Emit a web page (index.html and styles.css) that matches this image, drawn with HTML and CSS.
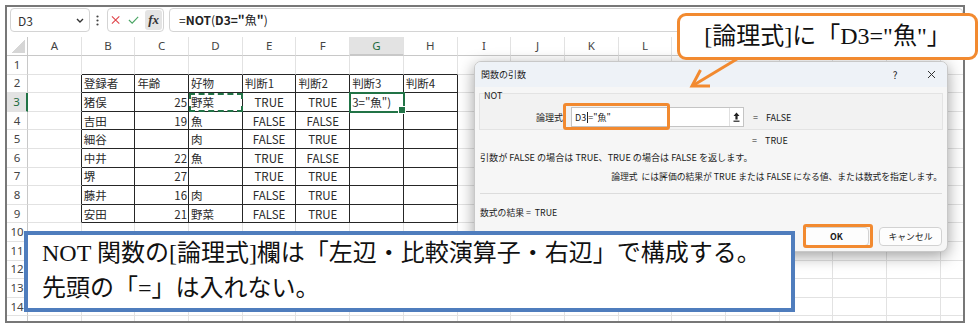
FILE: index.html
```html
<!DOCTYPE html>
<html lang="ja">
<head>
  <meta charset="UTF-8">
  <meta name="viewport" content="width=device-width, initial-scale=1.0">
  <title>NOT関数_関数の引数</title>
  <link rel="stylesheet" href="styles.css">
</head>
<body>
<div class="page">
  <div class="frame">
    <!-- 数式バー -->
    <div class="fbar">
      <div class="namebox">D3
        <svg width="8" height="5" viewBox="0 0 8 5"><polyline points="1,1 4,4 7,1" fill="none" stroke="#333" stroke-width="1.4"/></svg>
      </div>
      <div class="dots">
        <svg width="3" height="11" viewBox="0 0 3 11"><circle cx="1.5" cy="1.5" r="1.1" fill="#444"/><circle cx="1.5" cy="5.5" r="1.1" fill="#444"/><circle cx="1.5" cy="9.5" r="1.1" fill="#444"/></svg>
      </div>
      <div class="fbtns">
        <svg class="ico-x" width="10" height="10" viewBox="0 0 10 10"><path d="M1 1L9 9M9 1L1 9" stroke="#e0454b" stroke-width="1.2"/></svg>
        <svg class="ico-ok" width="12" height="10" viewBox="0 0 12 10"><polyline points="1,5 4.5,8.5 11,1.5" fill="none" stroke="#4aa564" stroke-width="1.2"/></svg>
        <span class="ico-fx">fx</span>
      </div>
      <div class="finput">=<b>NOT</b>(<b>D3="</b>魚<b>"</b>)</div>
    </div>

    <!-- シート -->
    <table class="sheet">
      <colgroup><col class="rh"><col span="18" class="cl"></colgroup>
      <tr class="hd"><th class="corner"></th><th>A</th><th>B</th><th>C</th><th>D</th><th>E</th><th>F</th><th class="sel">G</th><th>H</th><th>I</th><th>J</th><th>K</th><th>L</th><th>M</th><th>N</th><th>O</th><th>P</th><th>Q</th><th>R</th></tr>
      <tr><th>1</th><td></td><td class="tt"></td><td class="tt"></td><td class="tt"></td><td class="tt"></td><td class="tt"></td><td class="tt"></td><td class="tt"></td><td></td><td></td><td></td><td></td><td></td><td></td><td></td><td></td><td></td><td></td></tr>
      <tr><th>2</th><td class="tl"></td><td class="t">登録者</td><td class="t">年齢</td><td class="t">好物</td><td class="t">判断1</td><td class="t">判断2</td><td class="t">判断3</td><td class="t">判断4</td><td></td><td></td><td></td><td></td><td></td><td></td><td></td><td></td><td></td><td></td></tr>
      <tr><th class="cur">3</th><td class="tl"></td><td class="t">猪俣</td><td class="t n">25</td><td class="t ants">野菜</td><td class="t c">TRUE</td><td class="t c">TRUE</td><td class="t act">3="魚")</td><td class="t"></td><td></td><td></td><td></td><td></td><td></td><td></td><td></td><td></td><td></td><td></td></tr>
      <tr><th>4</th><td class="tl"></td><td class="t">吉田</td><td class="t n">19</td><td class="t">魚</td><td class="t c">FALSE</td><td class="t c">FALSE</td><td class="t"></td><td class="t"></td><td></td><td></td><td></td><td></td><td></td><td></td><td></td><td></td><td></td><td></td></tr>
      <tr><th>5</th><td class="tl"></td><td class="t">細谷</td><td class="t n"></td><td class="t">肉</td><td class="t c">FALSE</td><td class="t c">TRUE</td><td class="t"></td><td class="t"></td><td></td><td></td><td></td><td></td><td></td><td></td><td></td><td></td><td></td><td></td></tr>
      <tr><th>6</th><td class="tl"></td><td class="t">中井</td><td class="t n">22</td><td class="t">魚</td><td class="t c">TRUE</td><td class="t c">FALSE</td><td class="t"></td><td class="t"></td><td></td><td></td><td></td><td></td><td></td><td></td><td></td><td></td><td></td><td></td></tr>
      <tr><th>7</th><td class="tl"></td><td class="t">堺</td><td class="t n">27</td><td class="t"></td><td class="t c">TRUE</td><td class="t c">TRUE</td><td class="t"></td><td class="t"></td><td></td><td></td><td></td><td></td><td></td><td></td><td></td><td></td><td></td><td></td></tr>
      <tr><th>8</th><td class="tl"></td><td class="t">藤井</td><td class="t n">16</td><td class="t">肉</td><td class="t c">FALSE</td><td class="t c">TRUE</td><td class="t"></td><td class="t"></td><td></td><td></td><td></td><td></td><td></td><td></td><td></td><td></td><td></td><td></td></tr>
      <tr><th>9</th><td class="tl"></td><td class="t">安田</td><td class="t n">21</td><td class="t">野菜</td><td class="t c">FALSE</td><td class="t c">TRUE</td><td class="t"></td><td class="t"></td><td></td><td></td><td></td><td></td><td></td><td></td><td></td><td></td><td></td><td></td></tr>
      <tr><th>10</th><td></td><td></td><td></td><td></td><td></td><td></td><td></td><td></td><td></td><td></td><td></td><td></td><td></td><td></td><td></td><td></td><td></td><td></td></tr>
      <tr><th>11</th><td></td><td></td><td></td><td></td><td></td><td></td><td></td><td></td><td></td><td></td><td></td><td></td><td></td><td></td><td></td><td></td><td></td><td></td></tr>
      <tr><th>12</th><td></td><td></td><td></td><td></td><td></td><td></td><td></td><td></td><td></td><td></td><td></td><td></td><td></td><td></td><td></td><td></td><td></td><td></td></tr>
      <tr><th>13</th><td></td><td></td><td></td><td></td><td></td><td></td><td></td><td></td><td></td><td></td><td></td><td></td><td></td><td></td><td></td><td></td><td></td><td></td></tr>
      <tr><th>14</th><td></td><td></td><td></td><td></td><td></td><td></td><td></td><td></td><td></td><td></td><td></td><td></td><td></td><td></td><td></td><td></td><td></td><td></td></tr>
      <tr><th>15</th><td></td><td></td><td></td><td></td><td></td><td></td><td></td><td></td><td></td><td></td><td></td><td></td><td></td><td></td><td></td><td></td><td></td><td></td></tr>
    </table>

    <!-- 関数の引数ダイアログ -->
    <div class="dlg">
      <div class="dlg-title">
        <span>関数の引数</span>
        <span class="dlg-q">?</span>
        <span class="dlg-close"><svg width="9" height="9" viewBox="0 0 9 9"><path d="M1 1L8 8M8 1L1 8" stroke="#333" stroke-width="1"/></svg></span>
      </div>
      <div class="dlg-body">
        <div class="grp">
          <span class="grp-name">NOT</span>
          <div class="arg">
            <span class="arg-label">論理式</span>
            <span class="arg-input">D3<i class="caret"></i>="魚"
              <span class="ref-btn"><svg width="7" height="10" viewBox="0 0 7 10"><path d="M3.5 0.5L6.5 4H4.6V7.5H2.4V4H0.5Z" fill="#222"/><rect x="0.5" y="8.6" width="6" height="1.2" fill="#222"/></svg></span>
            </span>
            <span class="arg-val"><span class="eq">=</span>FALSE</span>
          </div>
        </div>
        <div class="ret"><span class="eq">=</span>TRUE</div>
        <p class="desc">引数が FALSE の場合は TRUE、TRUE の場合は FALSE を返します。</p>
        <p class="desc2"><b>論理式</b>&nbsp;&nbsp;には評価の結果が TRUE または FALSE になる値、または数式を指定します。</p>
        <div class="sep"></div>
        <p class="result">数式の結果 =&nbsp;&nbsp;TRUE</p>
        <div class="btns">
          <span class="btn btn-ok">OK</span>
          <span class="btn">キャンセル</span>
        </div>
      </div>
    </div>
  </div>

  <!-- 注釈 -->
  <div class="hl hl-arg"></div>
  <div class="hl hl-ok"></div>
  <svg class="arrow" width="70" height="40" viewBox="0 0 70 40">
    <line x1="57" y1="4" x2="13" y2="30.5" stroke="#f28a30" stroke-width="3"/>
    <polyline points="20.5,15 12,31 30,31" fill="none" stroke="#f28a30" stroke-width="3"/>
  </svg>
  <div class="callout">[論理式]に「D3="魚"」</div>
  <div class="note">
    <p>NOT 関数の[論理式]欄は「左辺・比較演算子・右辺」で構成する。</p>
    <p>先頭の「=」は入れない。</p>
  </div>
</div>
</body>
</html>
```

FILE: styles.css
```css
*{box-sizing: border-box;}
body{
  margin: 0;
  background: #fff;
  font-family: "Noto Sans CJK JP", "Noto Sans", sans-serif;
  color: #222;
}
.page{
  position: relative;
  width: 979px;height: 328px;
  overflow: hidden;
  padding: 5px 0 0 5px;
}
.frame{
  position: relative;
  width: 960px;height: 318px;
  border: 2px solid #777;
  overflow: hidden;
  background: #fff;
}

/* 数式バー */
.fbar{
  display: flex;
  align-items: flex-start;
  height: 30px;
  padding: 1px 0 0 3px;
}
.namebox{
  width: 80px;height: 24px;
  border: 1px solid #d4d4d4;border-radius: 4px;
  display: flex;align-items: center;justify-content: space-between;
  padding: 0 5px 0 7px;
  font-size: 12px;color: #333;
}
.dots{
  height: 24px;
  display: flex;align-items: center;
  margin: 0 8px 0 6px;
}
.fbtns{
  width: 57px;height: 24px;
  border: 1px solid #d4d4d4;border-radius: 4px;
  display: flex;align-items: center;
  padding: 0 1px 0 3px;
}
.ico-x{margin-right: 8px;}
.ico-ok{margin-right: 6px;}
.ico-fx{
  width: 18px;height: 20px;
  margin-left: auto;
  background: #e4e4e4;border-radius: 3px;
  font-family: "Liberation Serif", serif;font-style: italic;font-weight: bold;
  font-size: 13px;line-height: 19px;text-align: center;color: #333;
}
.finput{
  flex: 1;
  margin-left: 5px;
  height: 24px;
  border: 1px solid #d4d4d4;border-radius: 4px;
  padding-left: 9px;
  font-size: 12px;line-height: 22px;color: #222;
}
.finput b{font-weight: 700;}

/* シート */
.sheet{
  border-collapse: separate;border-spacing: 0;
  table-layout: fixed;
  width: 987.6px;
  font-size: 11.5px;
}
.sheet col.rh{width: 21px;}
.sheet col.cl{width: 53.7px;}
.sheet tr{height: 18.6px;}
.sheet tr.hd{height: 19px;}
.sheet th, .sheet td{
  padding: 0 2px;
  border-right: 1px solid #e2e2e2;
  border-bottom: 1px solid #e2e2e2;
  white-space: nowrap;overflow: hidden;
  line-height: 16px;
  font-weight: normal;
}
.sheet td{color: #2a2a2a;}
.sheet th{
  font-family: "Noto Sans", sans-serif;
  font-size: 11.5px;color: #444;
  text-align: center;
  padding: 0;
}
.sheet tr.hd th{border-bottom-color: #c8c8c8;}
.sheet th:first-child{border-right-color: #c8c8c8;}
.sheet th.corner{position: relative;}
.sheet th.corner::after{
  content: "";
  position: absolute;right: 2px;bottom: 2px;
  width: 14px;height: 13px;
  background: linear-gradient(to bottom right, transparent 50%, #d6d6d6 50%);
}
.sheet th.sel{background: #e3e3e3;border-bottom: 2px solid #217346;color: #1e6b3f;}
.sheet th.cur{background: #e3e3e3;border-right: 2px solid #217346;color: #1e6b3f;}

.sheet td.tt{border-bottom-color: #262626;}
.sheet td.tl{border-right-color: #262626;}
.sheet td.t{border-right-color: #262626;border-bottom-color: #262626;}
.sheet td.n{text-align: right;padding-right: 1px;}
.sheet td.c{text-align: center;}
.sheet td.ants{outline: 2px dashed #217346;outline-offset: -2px;}
.sheet td.act{
  position: relative;overflow: visible;
  outline: 2px solid #217346;outline-offset: -1px;
}
.sheet td.act::after{
  content: "";
  position: absolute;right: -3px;bottom: -3px;
  width: 6px;height: 6px;
  background: #217346;border: 1px solid #fff;
}

/* 関数の引数ダイアログ */
.dlg{
  position: absolute;left: 467px;top: 54px;
  width: 474px;height: 191px;
  background: #f6f6f6;
  border: 1px solid #c8c8c8;border-radius: 7px;
  box-shadow: 0 4px 16px rgba(0,0,0,.38);
  font-size: 8.8px;color: #1a1a1a;
  overflow: hidden;
}
.dlg-title{
  height: 25px;
  display: flex;align-items: center;
  padding-left: 6px;
  background: #eef2f7;
  font-size: 9px;
}
.dlg-q{margin-left: auto;width: 16px;text-align: center;font-size: 10px;}
.dlg-close{width: 16px;margin: 0 8px 0 20px;display: flex;justify-content: center;}
.dlg-body{padding: 0 5px;}
.grp{
  margin: 6px -1px 0;
  height: 37px;
  border: 1px solid #e3e3e3;
  background: #f2f2f2;
}
.grp-name{display: block;line-height: 10px;margin: -3px 0 0 4px;font-size: 9px;}
.arg{display: flex;align-items: center;height: 20px;margin-top: 6px;}
.arg-label{width: 83px;text-align: right;font-size: 9px;}
.arg-input{
  width: 173px;height: 20px;
  margin-left: 8px;
  background: #fff;
  border: 1px solid #c4c4c4;
  display: flex;align-items: center;
  padding-left: 3px;
  font-size: 9px;
}
.caret{display: inline-block;width: 1px;height: 11px;background: #222;margin: 0 0.5px;}
.ref-btn{
  margin-left: auto;
  width: 14px;height: 18px;
  border-left: 1px solid #e0e0e0;
  display: flex;align-items: center;justify-content: center;
}
.arg-val{margin-left: 9px;font-size: 9px;}
.eq{margin-right: 8px;}
.ret{margin: 4px 0 0 272px;line-height: 13px;font-size: 9px;}
.desc, .desc2, .result{margin: 0;line-height: 13px;}
.desc{margin-top: 4px;font-size: 9.1px;}
.desc2{margin-top: 6px;text-align: right;}
.desc2 b{font-weight: normal;}
.sep{height: 1px;background: #dcdcdc;margin-top: 10px;}
.result{margin-top: 12px;}
.btns{display: flex;justify-content: flex-end;gap: 10px;margin-top: 8px;}
.btn{
  height: 19px;width: 63px;
  background: #fdfdfd;
  border: 1px solid #d2d2d2;border-radius: 4px;
  display: flex;align-items: center;justify-content: center;
}
.btn-ok{width: 65px;font-weight: bold;}

/* 注釈 */
.hl{position: absolute;border: 3px solid #f28a30;border-radius: 3px;}
.hl-arg{left: 563px;top: 103px;width: 107px;height: 27px;}
.hl-ok{left: 803px;top: 224px;width: 70px;height: 24px;}
.arrow{position: absolute;left: 680px;top: 55px;}
.callout{
  position: absolute;left: 677px;top: 13px;
  width: 301px;height: 47px;
  background: #fff;
  border: 3px solid #f28a30;border-radius: 9px;
  font-family: "Liberation Serif", "Noto Sans CJK JP", serif;
  font-size: 24px;line-height: 41px;
  text-align: center;color: #111;
}
.note{
  position: absolute;left: 24px;top: 231px;
  width: 771px;height: 81px;
  background: #fff;
  border: 4px solid #4f7dbd;
  padding: 1px 0 0 14px;
  font-family: "Liberation Serif", "Noto Sans CJK JP", serif;
  font-size: 24px;color: #111;
}
.note p{margin: 0;line-height: 35px;white-space: nowrap;}
```
